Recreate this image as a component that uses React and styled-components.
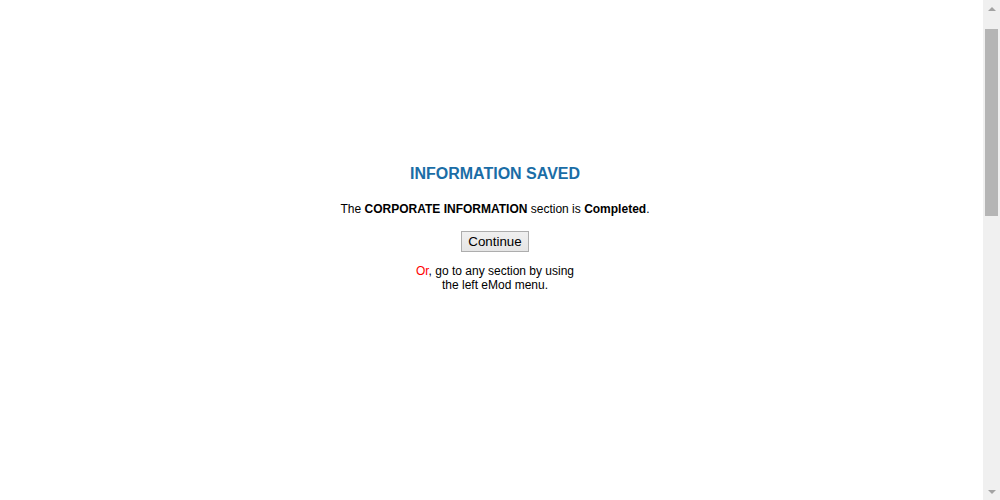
import React from "react";
import styled, { createGlobalStyle } from "styled-components";

const GlobalStyle = createGlobalStyle`
  html, body {
    margin: 0;
    padding: 0;
    background: #ffffff;
  }
  body {
    font-family: "Liberation Sans", Arial, sans-serif;
  }
`;

const Shell = styled.div`
  display: flex;
  height: 500px;
  overflow: hidden;
`;

const Page = styled.main`
  flex: 1;
  padding: 165px 0 0 7px;
  display: flex;
  flex-direction: column;
  align-items: center;
  color: #000000;
`;

const Title = styled.h2`
  margin: 0;
  font-size: 16px;
  font-weight: bold;
  color: #1a6da6;
`;

const Message = styled.p`
  margin: 19px 0 0;
  font-size: 12px;
`;

const ContinueButton = styled.button`
  margin-top: 15px;
  height: 21px;
  padding: 1px 6px;
  font-family: "Liberation Sans", Arial, sans-serif;
  font-size: 13.33px;
  color: #000000;
  background: linear-gradient(#f0f0f0, #e5e5e5);
  border: 1px solid #adadad;
  border-radius: 0;
  line-height: 16px;
`;

const Hint = styled.p`
  margin: 12px 0 0;
  font-size: 12px;
  line-height: 14px;
  text-align: center;
`;

const Red = styled.span`
  color: #ff0000;
`;

/* window scrollbar, drawn as in the screenshot */
const ScrollRail = styled.div`
  width: 17px;
  height: 500px;
  background: #f0f0f0;
  display: flex;
  flex-direction: column;
`;

const ArrowButton = styled.div`
  height: 17px;
  display: flex;
  justify-content: center;
  align-items: center;

  &::before {
    content: "";
    width: 0;
    height: 0;
    border-left: 4px solid transparent;
    border-right: 4px solid transparent;
    ${({ $down }) =>
      $down ? "border-top: 4px solid #a3a3a3;" : "border-bottom: 4px solid #a3a3a3;"}
  }
`;

const Track = styled.div`
  flex: 1;
  padding: 12px 2px 0;
`;

const Thumb = styled.div`
  height: 187px;
  background: #b5b5b5;
`;

export default function App() {
  return (
    <>
      <GlobalStyle />
      <Shell>
        <Page>
          <Title>INFORMATION SAVED</Title>
          <Message>
            The <b>CORPORATE INFORMATION</b> section is <b>Completed</b>.
          </Message>
          <ContinueButton type="button">Continue</ContinueButton>
          <Hint>
            <Red>Or</Red>, go to any section by using
            <br />
            the left eMod menu.
          </Hint>
        </Page>
        <ScrollRail>
          <ArrowButton />
          <Track>
            <Thumb />
          </Track>
          <ArrowButton $down />
        </ScrollRail>
      </Shell>
    </>
  );
}
